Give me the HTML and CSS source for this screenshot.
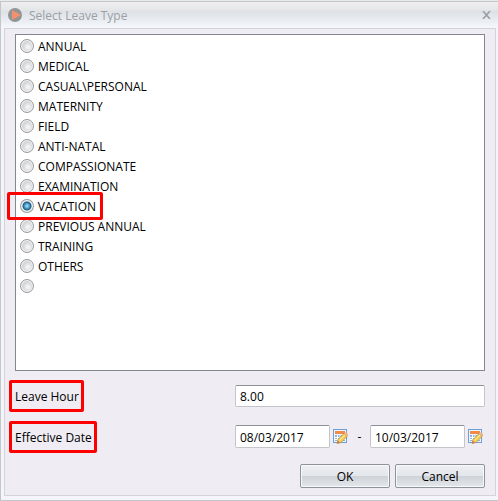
FILE: index.html
```html
<!DOCTYPE html>
<html lang="en">
<head>
    <meta charset="UTF-8">
    <meta name="viewport" content="width=device-width, initial-scale=1.0">
    <title>Select Leave Type</title>
    <link rel="stylesheet" href="styles.css">
</head>
<body>
    <svg width="0" height="0" class="defs" aria-hidden="true">
        <symbol id="calendar" viewBox="0 0 16 16">
            <rect x=".5" y=".5" width="13" height="13" fill="#eef5fd" stroke="#6f9fd8"/>
            <rect x="2" y="2" width="10" height="3" fill="#f08a4b"/>
            <path d="M2 6h10v6H2z" fill="#8fb2dc"/>
            <path d="M2 8.5h10M2 10.5h10M4.5 6v6M7 6v6M9.5 6v6" stroke="#fff"/>
            <path d="M4 14.5l1-4 6-6 3 3-6 6z" fill="#f7cf58" stroke="#b58432" stroke-width=".7"/>
            <path d="M6.5 11.5l6-6" stroke="#fff0a8"/>
            <path d="M11 4.5l1-1q1-.6 2.2.5t.8 2.2l-1 1.3z" fill="#e8b58c"/>
            <path d="M4 14.5l.8-3.2 2.2 2.4z" fill="#c97a4a"/>
        </symbol>
    </svg>

    <div class="window">
        <header class="titlebar">
            <svg class="logo" viewBox="0 0 14 14" aria-hidden="true">
                <circle cx="7" cy="7" r="7" fill="#929496"/>
                <path d="M4 2l9 5-9 5z" fill="#f2916f"/>
            </svg>
            <h1>Select Leave Type</h1>
            <button type="button" class="close" aria-label="Close">
                <svg viewBox="0 0 9 8"><path d="M1 0l7 8M8 0L1 8" stroke="#9aa1a8" stroke-width="1.7"/></svg>
            </button>
        </header>

        <form class="panel">
            <div class="list">
                <label><input type="radio" name="leave"><span>ANNUAL</span></label>
                <label><input type="radio" name="leave"><span>MEDICAL</span></label>
                <label><input type="radio" name="leave"><span>CASUAL\PERSONAL</span></label>
                <label><input type="radio" name="leave"><span>MATERNITY</span></label>
                <label><input type="radio" name="leave"><span>FIELD</span></label>
                <label><input type="radio" name="leave"><span>ANTI-NATAL</span></label>
                <label><input type="radio" name="leave"><span>COMPASSIONATE</span></label>
                <label><input type="radio" name="leave"><span>EXAMINATION</span></label>
                <label class="mark mark-option"><input type="radio" name="leave" checked><span>VACATION</span></label>
                <label><input type="radio" name="leave"><span>PREVIOUS ANNUAL</span></label>
                <label><input type="radio" name="leave"><span>TRAINING</span></label>
                <label><input type="radio" name="leave"><span>OTHERS</span></label>
                <label><input type="radio" name="leave" aria-label="None"></label>
            </div>

            <div class="row">
                <label class="mark" for="hour">Leave Hour</label>
                <input type="text" class="field" id="hour" value="8.00">
            </div>

            <div class="row">
                <label class="mark" for="from">Effective Date</label>
                <div class="dates">
                    <input type="text" class="field" id="from" value="08/03/2017">
                    <button type="button" class="pick" aria-label="Pick start date"><svg><use href="#calendar"/></svg></button>
                    <span class="dash">-</span>
                    <input type="text" class="field" value="10/03/2017" aria-label="End date">
                    <button type="button" class="pick" aria-label="Pick end date"><svg><use href="#calendar"/></svg></button>
                </div>
            </div>

            <div class="buttons">
                <button type="button" class="btn">OK</button>
                <button type="button" class="btn">Cancel</button>
            </div>
        </form>
    </div>
</body>
</html>
```
FILE: styles.css
```css
*{
    margin: 0;
    padding: 0;
    box-sizing: border-box;
}
body{
    min-height: 100vh;
    padding-top: 1px;
    display: flex;
    flex-direction: column;
    background-color: #e6eceb;
    font-family: "Open Sans", "Segoe UI", sans-serif;
    font-size: 12px;
    line-height: 20px;
    color: #000;
}
input, button{
    font: inherit;
    color: inherit;
}
.defs{
    position: absolute;
}
.window{
    flex: 1;
    display: flex;
    flex-direction: column;
    padding: 0 2px 4px 3px;
    border: 1px solid #c4c6ca;
    border-right: none;
    background-color: #f3f5fa;
}
.titlebar{
    height: 26px;
    margin: 0 -2px 0 -3px;
    padding: 0 7px;
    display: flex;
    align-items: center;
    gap: 7px;
    background: linear-gradient(#efefef, #e5e6e7 8px, #dde1e6 9px, #f4f7fb);
}
.titlebar h1{
    flex: 1;
    padding-top: 2px;
    font-size: 12px;
    font-weight: normal;
    color: #9b9fa5;
}
.logo{
    width: 14px;
    height: 14px;
}
.close{
    width: 9px;
    height: 8px;
    border: none;
    background: none;
}
.close svg{
    display: block;
}
.panel{
    flex: 1;
    display: flex;
    flex-direction: column;
    padding: 5px 10px 7px;
    border: 1px solid #d3d4da;
    background-color: #efedf3;
}
.list{
    flex: 1;
    margin-bottom: 14px;
    padding: 1px 4px;
    border: 1px solid #828790;
    background-color: #fff;
}
.list label{
    height: 20px;
    display: flex;
    align-items: center;
    gap: 4px;
}
.list span{
    padding-top: 2px;
}
.list input{
    appearance: none;
    width: 14px;
    height: 14px;
    border: 1px solid #999ca0;
    border-radius: 50%;
    background: radial-gradient(circle at 7px 7px, #f4f4f4 1px, #d3d5d8 5px);
    box-shadow: inset 0 0 0 1px #f4f4f4;
}
.list input:checked{
    background: radial-gradient(circle at 6px 6px, #8fcdea 1px, #2f86b5 3px, #1f577d 4px, #dfe1e4 5px);
}

/* red highlight frames */
.mark{
    position: relative;
}
.mark::after{
    content: "";
    position: absolute;
    inset: -5px -5px -5px -6px;
    border: 3px solid #f00;
    border-radius: 2px;
}
.list .mark-option{
    width: 76px;
}
.list .mark-option::after{
    inset: -4px -7px -4px -13px;
}
.row{
    margin-bottom: 18px;
    display: flex;
    align-items: center;
    justify-content: space-between;
}
.row + .row{
    margin-bottom: 16px;
}
.row label{
    padding-top: 2px;
}
.field{
    width: 250px;
    height: 22px;
    padding: 1px 4px 0;
    border: 1px solid #c3c5ca;
    border-top-color: #8c9097;
    border-radius: 2px;
    background-color: #fff;
}
.dates{
    width: 250px;
    padding-right: 1px;
    display: flex;
    align-items: center;
}
.dates .field{
    width: 95px;
    height: 23px;
}
.pick{
    width: 16px;
    height: 16px;
    margin-left: 3px;
    border: none;
    background: none;
}
.pick svg{
    display: block;
    width: 16px;
    height: 16px;
}
.dash{
    flex: 1;
    text-align: center;
}
.buttons{
    display: flex;
    justify-content: flex-end;
    gap: 5px;
}
.btn{
    width: 90px;
    height: 24px;
    padding-top: 1px;
    border: 1px solid #8d939b;
    border-radius: 2px;
    background: linear-gradient(#eef0f3, #e3e6ea 50%, #cdd2d8 50%, #e4e8ec);
    box-shadow: inset 0 0 0 1px #f8f9fa;
}
.btn:active{
    background: #cdd2d8;
}
```
